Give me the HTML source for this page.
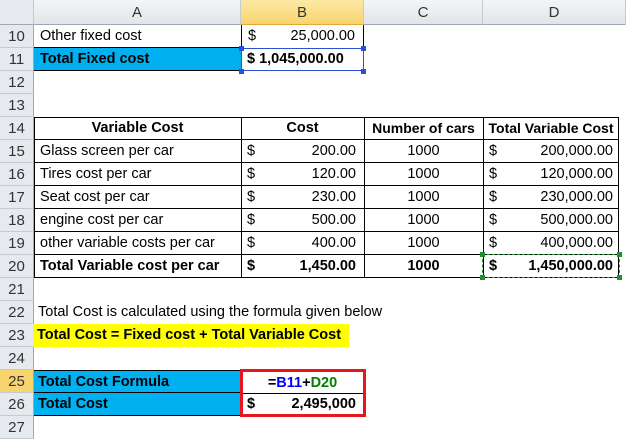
<!DOCTYPE html><html><head><style>
body{margin:0;width:626px;height:430px;overflow:hidden;background:#fff;font-family:"Liberation Sans",sans-serif;font-size:14.5px;color:#000;position:relative}
div{position:absolute;box-sizing:border-box;white-space:nowrap}
.h{background:linear-gradient(#f4f5f7,#e1e4e9);border-right:1px solid #c5c9d0;border-bottom:1px solid #9ea7b4;color:#333;text-align:center;top:0;height:25px;line-height:25px;font-size:15px}
.r{left:0;width:34px;background:#e6e9ee;border-bottom:1px solid #c5c9d0;border-right:1px solid #9ea7b4;text-align:center;color:#333;height:23px;line-height:23px;font-size:15px}
.c{height:23px;line-height:23px;padding:0 6px}
.b{font-weight:bold}
.hd{width:5px;height:5px;background:#2a4fd8}
.hg{width:5px;height:5px;background:#1f8f2f}
</style></head><body>
<div class="h" style="left:0;width:34px;background:#e6e9ee"></div>
<div class="h" style="left:34px;width:207px">A</div>
<div class="h" style="left:241px;width:123px;background:linear-gradient(#fde9a5,#f8d46e);border-bottom:1px solid #e3a73a">B</div>
<div class="h" style="left:364px;width:119px">C</div>
<div class="h" style="left:483px;width:143px">D</div>

<div class="r" style="top:25px">10</div><div class="r" style="top:48px">11</div><div class="r" style="top:71px">12</div><div class="r" style="top:94px">13</div><div class="r" style="top:117px">14</div><div class="r" style="top:140px">15</div><div class="r" style="top:163px">16</div><div class="r" style="top:186px">17</div><div class="r" style="top:209px">18</div><div class="r" style="top:232px">19</div><div class="r" style="top:255px">20</div><div class="r" style="top:278px">21</div><div class="r" style="top:301px">22</div><div class="r" style="top:324px">23</div><div class="r" style="top:347px">24</div><div class="r" style="top:370px;background:#f8d46e">25</div><div class="r" style="top:393px">26</div><div class="r" style="top:416px">27</div>

<div class="c" style="left:34px;top:25px;width:207px;border-bottom:1px solid #000">Other fixed cost</div>
<div class="c" style="left:241px;top:25px;width:123px;border-left:1px solid #000;border-right:1px solid #000">$<span style="position:absolute;right:8px">25,000.00</span></div>
<div class="c b" style="left:34px;top:48px;width:207px;background:#00b0f0;border-bottom:1px solid #000">Total Fixed cost</div>
<div class="c b" style="left:241px;top:48px;width:123px;border:1px solid #2a4fd8;line-height:21px;padding:0 5px">$ 1,045,000.00</div>
<div class="hd" style="left:239px;top:46px"></div><div class="hd" style="left:361px;top:46px"></div><div class="hd" style="left:239px;top:69px"></div><div class="hd" style="left:361px;top:69px"></div>

<div style="left:34px;top:117px;width:585px;height:161px;border:1px solid #000"></div>
<div style="left:241px;top:117px;height:161px;border-left:1px solid #000"></div>
<div style="left:364px;top:117px;height:161px;border-left:1px solid #000"></div>
<div style="left:483px;top:117px;height:161px;border-left:1px solid #000"></div>
<div style="left:34px;top:139px;width:585px;border-top:1px solid #000"></div>
<div style="left:34px;top:162px;width:585px;border-top:1px solid #000"></div>
<div style="left:34px;top:185px;width:585px;border-top:1px solid #000"></div>
<div style="left:34px;top:208px;width:585px;border-top:1px solid #000"></div>
<div style="left:34px;top:231px;width:585px;border-top:1px solid #000"></div>
<div style="left:34px;top:254px;width:585px;border-top:1px solid #000"></div>

<div class="c b" style="left:34px;top:117px;width:207px;text-align:center">Variable Cost</div>
<div class="c b" style="left:241px;top:117px;width:123px;text-align:center">Cost</div>
<div class="c b" style="left:364px;top:117px;width:119px;text-align:center;padding:0;font-size:14px">Number of cars</div>
<div class="c b" style="left:483px;top:117px;width:136px;text-align:center;padding:0;font-size:14px">Total Variable Cost</div>

<div class="c" style="left:34px;top:140px">Glass screen per car</div>
<div class="c" style="left:34px;top:163px">Tires cost per car</div>
<div class="c" style="left:34px;top:186px">Seat cost per car</div>
<div class="c" style="left:34px;top:209px">engine cost per car</div>
<div class="c" style="left:34px;top:232px">other variable costs per car</div>
<div class="c b" style="left:34px;top:255px">Total Variable cost per car</div>

<div class="c" style="left:241px;top:140px;width:123px">$<span style="position:absolute;right:8px">200.00</span></div>
<div class="c" style="left:241px;top:163px;width:123px">$<span style="position:absolute;right:8px">120.00</span></div>
<div class="c" style="left:241px;top:186px;width:123px">$<span style="position:absolute;right:8px">230.00</span></div>
<div class="c" style="left:241px;top:209px;width:123px">$<span style="position:absolute;right:8px">500.00</span></div>
<div class="c" style="left:241px;top:232px;width:123px">$<span style="position:absolute;right:8px">400.00</span></div>
<div class="c b" style="left:241px;top:255px;width:123px">$<span style="position:absolute;right:8px">1,450.00</span></div>

<div class="c" style="left:364px;top:140px;width:119px;text-align:center">1000</div>
<div class="c" style="left:364px;top:163px;width:119px;text-align:center">1000</div>
<div class="c" style="left:364px;top:186px;width:119px;text-align:center">1000</div>
<div class="c" style="left:364px;top:209px;width:119px;text-align:center">1000</div>
<div class="c" style="left:364px;top:232px;width:119px;text-align:center">1000</div>
<div class="c b" style="left:364px;top:255px;width:119px;text-align:center">1000</div>

<div class="c" style="left:483px;top:140px;width:136px">$<span style="position:absolute;right:6px">200,000.00</span></div>
<div class="c" style="left:483px;top:163px;width:136px">$<span style="position:absolute;right:6px">120,000.00</span></div>
<div class="c" style="left:483px;top:186px;width:136px">$<span style="position:absolute;right:6px">230,000.00</span></div>
<div class="c" style="left:483px;top:209px;width:136px">$<span style="position:absolute;right:6px">500,000.00</span></div>
<div class="c" style="left:483px;top:232px;width:136px">$<span style="position:absolute;right:6px">400,000.00</span></div>
<div class="c b" style="left:482px;top:254px;width:138px;height:24px;border:1px dashed #1f8f2f;line-height:22px">$<span style="position:absolute;right:6px">1,450,000.00</span></div>
<div class="hg" style="left:480px;top:252px"></div><div class="hg" style="left:617px;top:252px"></div><div class="hg" style="left:480px;top:275px"></div><div class="hg" style="left:617px;top:275px"></div>

<div class="c" style="left:34px;top:301px;padding:0 4px">Total Cost is calculated using the formula given below</div>
<div class="c b" style="left:33px;top:324px;width:316px;background:#ffff00;padding:0 4px">Total Cost = Fixed cost + Total Variable Cost</div>

<div class="c b" style="left:34px;top:370px;width:207px;background:#00b0f0;border-top:1px solid #000;border-bottom:1px solid #000;padding:0 4px">Total Cost Formula</div>
<div class="c b" style="left:34px;top:393px;width:207px;background:#00b0f0;border-bottom:1px solid #000;padding:0 4px">Total Cost</div>
<div class="c b" style="left:241px;top:372px;width:123px;text-align:center">=<span style="color:#0000ff">B11</span>+<span style="color:#008000">D20</span></div>
<div style="left:241px;top:393px;width:123px;border-top:1px solid #000"></div>
<div class="c b" style="left:241px;top:393px;width:123px">$<span style="position:absolute;right:8px">2,495,000</span></div>
<div style="left:240px;top:369px;width:126px;height:48px;border:3px solid #e8141e"></div>
</body></html>
